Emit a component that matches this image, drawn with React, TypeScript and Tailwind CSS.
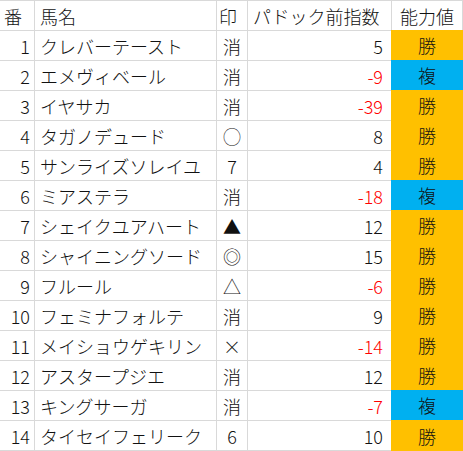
import React from 'react';

type Row = {
  no: number;
  name: string;
  mark: string;
  index: number;
  rank: '勝' | '複';
};

const rows: Row[] = [
  { no: 1, name: 'クレバーテースト', mark: '消', index: 5, rank: '勝' },
  { no: 2, name: 'エメヴィベール', mark: '消', index: -9, rank: '複' },
  { no: 3, name: 'イヤサカ', mark: '消', index: -39, rank: '勝' },
  { no: 4, name: 'タガノデュード', mark: '◯', index: 8, rank: '勝' },
  { no: 5, name: 'サンライズソレイユ', mark: '7', index: 4, rank: '勝' },
  { no: 6, name: 'ミアステラ', mark: '消', index: -18, rank: '複' },
  { no: 7, name: 'シェイクユアハート', mark: '▲', index: 12, rank: '勝' },
  { no: 8, name: 'シャイニングソード', mark: '◎', index: 15, rank: '勝' },
  { no: 9, name: 'フルール', mark: '△', index: -6, rank: '勝' },
  { no: 10, name: 'フェミナフォルテ', mark: '消', index: 9, rank: '勝' },
  { no: 11, name: 'メイショウゲキリン', mark: '×', index: -14, rank: '勝' },
  { no: 12, name: 'アスタープジエ', mark: '消', index: 12, rank: '勝' },
  { no: 13, name: 'キングサーガ', mark: '消', index: -7, rank: '複' },
  { no: 14, name: 'タイセイフェリーク', mark: '6', index: 10, rank: '勝' },
];

const cell = 'flex items-center h-[30px] border-t border-[#d9d9d9] leading-none';

const App: React.FC = () => {
  return (
    <div className="w-[463px] bg-white text-[#111] text-[18px] font-light font-['Noto_Sans_CJK_JP',sans-serif]">
      {/* Header */}
      <div className="grid grid-cols-[34px_182px_31px_144px_72px]">
        <div className={`${cell} pl-1`}>番</div>
        <div className={`${cell} border-l pl-[5px]`}>馬名</div>
        <div className={`${cell} border-l pl-[2px]`}>印</div>
        <div className={`${cell} border-l pl-[5px]`}>パドック前指数</div>
        <div className={`${cell} border-l border-r justify-center`}>能力値</div>
      </div>

      {/* Body */}
      {rows.map((r, i) => {
        const last = i === rows.length - 1;
        const b = last ? 'border-b h-[31px]' : '';
        return (
          <div key={r.no} className="grid grid-cols-[34px_182px_31px_144px_72px]">
            <div className={`${cell} ${b} justify-end pr-1`}>{r.no}</div>
            <div className={`${cell} ${b} border-l pl-[5px] whitespace-nowrap`}>{r.name}</div>
            <div className={`${cell} ${b} border-l justify-center`}>{r.mark}</div>
            <div
              className={`${cell} ${b} border-l justify-end pr-2 ${
                r.index < 0 ? 'text-[#ff0000]' : ''
              }`}
            >
              {r.index}
            </div>
            <div
              className={`flex items-center justify-center leading-none ${
                last ? 'h-[31px]' : 'h-[30px]'
              } ${r.rank === '勝' ? 'bg-[#ffc000]' : 'bg-[#00b0f0]'}`}
            >
              {r.rank}
            </div>
          </div>
        );
      })}
    </div>
  );
};

export default App;
